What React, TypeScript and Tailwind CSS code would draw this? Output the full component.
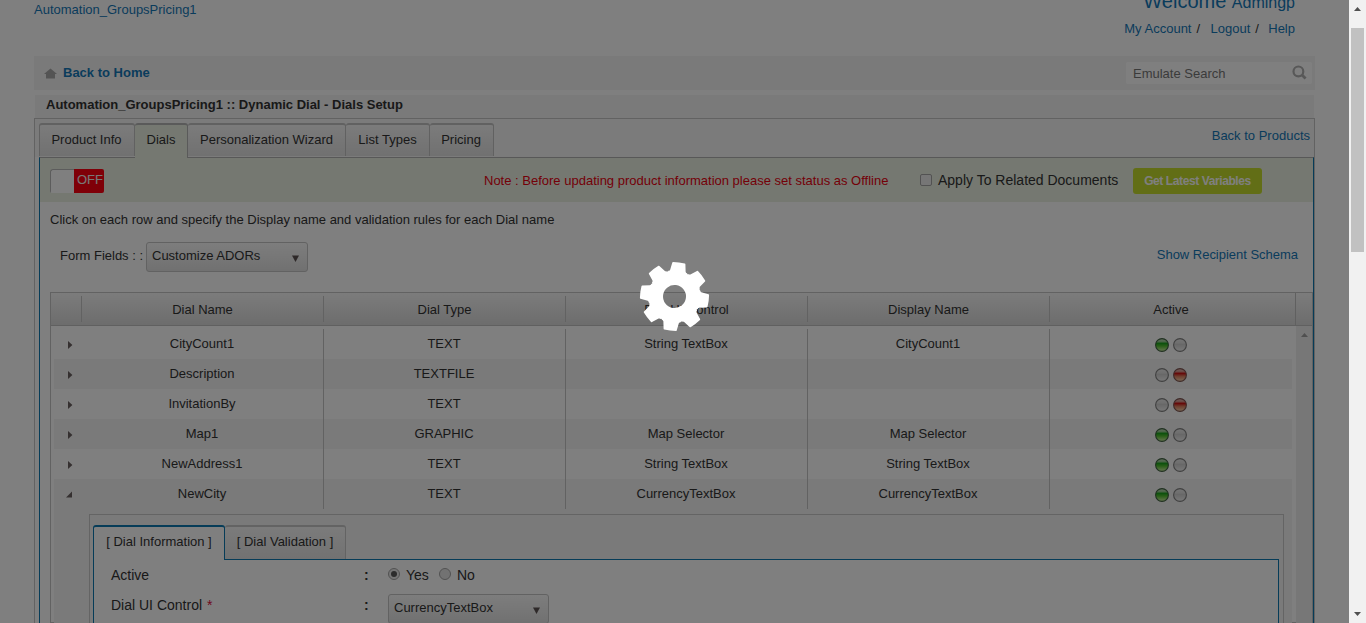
import React from 'react';

const FONT = "font-['Liberation_Sans',Arial,sans-serif]";

type Dial = { name: string; type: string; control: string; display: string; active: boolean };

const dials: Dial[] = [
  { name: 'CityCount1', type: 'TEXT', control: 'String TextBox', display: 'CityCount1', active: true },
  { name: 'Description', type: 'TEXTFILE', control: '', display: '', active: false },
  { name: 'InvitationBy', type: 'TEXT', control: '', display: '', active: false },
  { name: 'Map1', type: 'GRAPHIC', control: 'Map Selector', display: 'Map Selector', active: true },
  { name: 'NewAddress1', type: 'TEXT', control: 'String TextBox', display: 'String TextBox', active: true },
  { name: 'NewCity', type: 'TEXT', control: 'CurrencyTextBox', display: 'CurrencyTextBox', active: true },
];

function Orb({ color }: { color: 'green' | 'red' | 'gray' }) {
  return (
    <svg width="14" height="14" viewBox="0 0 14 14" className="block">
      <defs>
        <linearGradient id="orb-green" x1="0" y1="0" x2="0" y2="1">
          <stop offset="0" stopColor="#c4dcbc" />
          <stop offset="0.22" stopColor="#9ccc94" />
          <stop offset="0.38" stopColor="#1ca41c" />
          <stop offset="0.6" stopColor="#58c034" />
          <stop offset="1" stopColor="#d4f0a8" />
        </linearGradient>
        <linearGradient id="orb-red" x1="0" y1="0" x2="0" y2="1">
          <stop offset="0" stopColor="#e4bcb4" />
          <stop offset="0.22" stopColor="#d89890" />
          <stop offset="0.38" stopColor="#cc1414" />
          <stop offset="0.6" stopColor="#dc7c5c" />
          <stop offset="1" stopColor="#f8d8b0" />
        </linearGradient>
        <linearGradient id="orb-gray" x1="0" y1="0" x2="0" y2="1">
          <stop offset="0" stopColor="#ececec" />
          <stop offset="0.35" stopColor="#dedede" />
          <stop offset="0.45" stopColor="#d0d0d0" />
          <stop offset="1" stopColor="#f4f4f4" />
        </linearGradient>
      </defs>
      <circle
        cx="7"
        cy="7"
        r="6.4"
        fill={`url(#orb-${color})`}
        stroke={color === 'green' ? '#3f6040' : color === 'red' ? '#7c5450' : '#808080'}
        strokeWidth="1.1"
      />
    </svg>
  );
}

function Gear() {
  return (
    <svg width="69" height="69" viewBox="-34.5 -34.5 69 69" className="block overflow-visible">
      <g transform="rotate(7.5)" fill="#fff">
        <circle r="18.6" fill="none" stroke="#fff" strokeWidth="14.2" />
        {[0, 45, 90, 135, 180, 225, 270, 315].map((a) => (
          <path
            key={a}
            d="M-9.6 -22L-9.6 -24.6Q-8.4 -24.6 -7.8 -26L-6.6 -33.4Q-6.5 -34 -5.9 -34.1Q0 -34.8 5.9 -34.1Q6.5 -34 6.6 -33.4L7.8 -26Q8.4 -24.6 9.6 -24.6L9.6 -22Z"
            transform={`rotate(${a})`}
          />
        ))}
      </g>
    </svg>
  );
}

function SelectBox({ label, className }: { label: string; className: string }) {
  return (
    <div
      className={`flex justify-between rounded-[3px] border border-[#c4c4c4] bg-linear-to-b from-[#fbfbfb] to-[#e2e2e2] pl-[5px] pr-[8px] ${className}`}
    >
      <span className="leading-[26px]">{label}</span>
      <svg width="7" height="7" viewBox="0 0 7 7" className="mt-[12px]">
        <path d="M0 0.5H7L3.5 7Z" fill="#5c5252" />
      </svg>
    </div>
  );
}

function Tab({ label, className }: { label: string; className: string }) {
  return (
    <div
      className={`h-[33px] border-t-2 border-r border-[#c2c2c2] bg-linear-to-b from-[#f7f7f7] to-[#e2e2e2] text-center leading-[30px] rounded-t-[3px] ${className}`}
    >
      {label}
    </div>
  );
}

function TableRow({ dial, index }: { dial: Dial; index: number }) {
  const open = index === 5;
  const cell = 'w-[242px] border-r border-[#c4c4c4] pr-[1px] text-center leading-[29px]';
  return (
    <div className={`flex h-[30px] w-[1238px] ${index % 2 ? 'bg-[#f4f4f4]' : 'bg-white'}`}>
      <div className="w-[28px] pl-[12px] pt-[12px]">
        {open ? (
          <svg width="6" height="7" viewBox="0 0 6 7" className="block">
            <path d="M6 0.4V6.4H0Z" fill="#6a6060" />
          </svg>
        ) : (
          <svg width="6" height="8" viewBox="0 0 6 8" className="ml-[2px] block">
            <path d="M0 0L4.4 4L0 8Z" fill="#6a6060" />
          </svg>
        )}
      </div>
      <div className={cell}>{dial.name}</div>
      <div className={cell}>{dial.type}</div>
      <div className={cell}>{dial.control}</div>
      <div className={cell}>{dial.display}</div>
      <div className="flex w-[242px] justify-center gap-[4px] pt-[9px]">
        <Orb color={dial.active ? 'green' : 'gray'} />
        <Orb color={dial.active ? 'gray' : 'red'} />
      </div>
    </div>
  );
}

function DialDetail() {
  return (
    <div className="h-[130px] w-[1238px] bg-[#f4f4f4] pl-[35px] pt-[5px]">
      <div className="h-[130px] w-[1195px] border border-[#c8c8c8] bg-[#f5f5f5] pl-[3px] pt-[10px]">
        <div className="flex h-[34px]">
          <div className="z-10 h-[35px] w-[132px] rounded-t-[3px] border border-t-2 border-b-0 border-[#0c78b0] bg-white text-center leading-[30px]">
            [ Dial Information ]
          </div>
          <div className="h-[34px] w-[121px] rounded-t-[3px] border-t-2 border-r border-[#c6c6c6] bg-linear-to-b from-[#f7f7f7] to-[#e4e4e4] text-center leading-[30px]">
            [ Dial Validation ]
          </div>
        </div>
        <div className="h-[120px] w-[1186px] border border-[#0c78b0] bg-white pl-[17px] text-[14px]">
          <div className="flex h-[30px] items-center">
            <span className="w-[253px]">Active</span>
            <span className="w-[24px] font-bold">:</span>
            <span className="mb-[2px] flex size-[12px] items-center justify-center rounded-full border border-[#a4a4a4] bg-[#eaeaea]">
              <span className="size-[6px] rounded-full bg-[#585858]" />
            </span>
            <span className="ml-[6px] w-[27px]">Yes</span>
            <span className="mb-[2px] ml-[6px] size-[12px] rounded-full border border-[#a4a4a4] bg-[#e4e4e4]" />
            <span className="ml-[6px]">No</span>
          </div>
          <div className="flex h-[40px]">
            <span className="w-[253px] leading-[30px]">
              Dial UI Control <span className="ml-px text-[#e0103c]">*</span>
            </span>
            <span className="w-[24px] font-bold leading-[30px]">:</span>
            <SelectBox label="CurrencyTextBox" className="mt-[4px] h-[30px] w-[161px] text-[13px]" />
          </div>
        </div>
      </div>
    </div>
  );
}

function DialTable() {
  const head = 'my-[3px] w-[242px] border-r border-[#c4c4c4] text-center leading-[28px]';
  return (
    <div className="ml-[10px] h-[331px] w-[1263px] border border-[#c4c4c4]">
      <div className="flex h-[33px] border-b border-[#c0c0c0] bg-linear-to-b from-[#f8f8f8] to-[#dadada]">
        <div className="my-[3px] w-[31px] border-r border-[#c4c4c4]" />
        <div className={head}>Dial Name</div>
        <div className={head}>Dial Type</div>
        <div className={head}>Dial UI Control</div>
        <div className={head}>Display Name</div>
        <div className="w-[246px] border-r border-[#c0c0c0] pr-[3px] text-center leading-[34px]">Active</div>
      </div>
      <div className="flex">
        <div className="w-[1245px] pl-[3px] pt-[3px]">
          {dials.map((d, i) => (
            <TableRow key={d.name} dial={d} index={i} />
          ))}
          <DialDetail />
        </div>
        <div className="flex h-[300px] w-[16px] justify-center bg-[#efefef] pt-[7px]">
          <svg width="7" height="4" viewBox="0 0 7 4">
            <path d="M0 4L3.5 0L7 4Z" fill="#a0a0a0" />
          </svg>
        </div>
      </div>
    </div>
  );
}

export default function App() {
  return (
    <div className={`relative flex h-[623px] w-[1366px] overflow-hidden bg-white text-[13px] text-[#333] ${FONT}`}>
      <div className="h-[623px] w-[1349px] overflow-hidden pl-[34px]">
        <header className="flex h-[56px] w-[1281px] justify-between text-[#1478b8]">
          <div className="leading-[19px]">Automation_GroupsPricing1</div>
          <div className="pr-[20px] text-right">
            <div className="-mt-[9px] h-[28px] whitespace-nowrap text-[20px] leading-[20px]">
              Welcome <span className="text-[16px]">Admingp</span>
            </div>
            <div className="flex justify-end leading-[20px]">
              <span>My Account</span>
              <span className="ml-[5px] w-[14px] text-left text-[#333]">/</span>
              <span>Logout</span>
              <span className="ml-[5px] w-[13px] text-left text-[#333]">/</span>
              <span>Help</span>
            </div>
          </div>
        </header>

        <div className="flex h-[34px] w-[1281px] items-center justify-between bg-[#f4f4f4] pl-[10px] pr-[3px]">
          <div className="flex items-center">
            <svg width="13" height="11" viewBox="0 0 13 11">
              <path d="M6.5 0.5L13 6H11V10.5H2V6H0Z" fill="#a8a8a8" />
            </svg>
            <span className="ml-[6px] font-bold text-[#1478b8]">Back to Home</span>
          </div>
          <div className="flex h-[22px] w-[186px] items-center justify-between rounded-[2px] bg-white pl-[7px] pr-[5px] text-[#777]">
            <span className="pt-[2px]">Emulate Search</span>
            <svg width="15" height="15" viewBox="0 0 15 15" fill="none" stroke="#b0b0b0" className="mb-px">
              <circle cx="6.4" cy="6.4" r="4.9" strokeWidth="2.2" />
              <path d="M10 10L13.6 13.4" strokeWidth="2.8" />
            </svg>
          </div>
        </div>

        <div className="ml-[1px] mt-[5px] h-[23px] w-[1279px] bg-[#f4f4f4] pl-[11px] font-bold leading-[19px]">
          Automation_GroupsPricing1 :: Dynamic Dial - Dials Setup
        </div>

        <main className="h-[520px] w-[1281px] border border-[#c4c4c4]">
          <div className="flex h-[38px] justify-between bg-[#f6f6f6] pl-[4px] pt-[4px]">
            <div className="flex">
              <Tab label="Product Info" className="w-[96px] border-l pr-[1px]" />
              <div className="z-10 h-[35px] w-[53px] rounded-t-[3px] border-t-2 border-r border-[#b4b4b4] bg-[#eaf0e2] text-center leading-[30px]">
                Dials
              </div>
              <Tab label="Personalization Wizard" className="w-[158px]" />
              <Tab label="List Types" className="w-[84px]" />
              <Tab label="Pricing" className="w-[64px] pr-[1px]" />
            </div>
            <span className="pr-[4px] leading-[26px] text-[#1478b8]">Back to Products</span>
          </div>
          <div className="ml-[4px] h-[480px] w-[1275px] border border-t-[#b0b0b0] border-[#0c78b0]">
            <div className="flex h-[44px] items-center bg-[#eaf0e2] pl-[10px] pt-[2px]">
              <div className="flex h-[24px] w-[54px] overflow-hidden rounded-[2px]">
                <div className="w-[24px] rounded-tl-[3px] border-l border-t border-[#b8b8b8] bg-white" />
                <div className="w-[30px] bg-[#ff0010] pl-[3px] text-[13px] leading-[21px] text-[#f0f0f0]">OFF</div>
              </div>
              <span className="ml-[380px] w-[436px] text-[#e80010]">
                Note : Before updating product information please set status as Offline
              </span>
              <span className="mb-[2px] size-[12px] rounded-[2px] border border-[#a4a4a4] bg-[#ececec]" />
              <span className="mb-[2px] ml-[6px] w-[195px] text-[14px]">Apply To Related Documents</span>
              <span className="flex h-[26px] w-[129px] items-center justify-center rounded-[3px] bg-[#c5dd2c] text-[12px] font-bold tracking-[-0.4px] text-white">
                Get Latest Variables
              </span>
            </div>
            <div className="h-[39px] pl-[10px] leading-[35px]">
              Click on each row and specify the Display name and validation rules for each Dial name
            </div>
            <div className="flex h-[51px] pl-[20px]">
              <span className="w-[86px] leading-[29px]">Form Fields : :</span>
              <SelectBox label="Customize ADORs" className="mt-[1px] h-[30px] w-[162px]" />
              <span className="ml-auto pr-[15px] leading-[27px] tracking-[-0.02px] text-[#1478b8]">
                Show Recipient Schema
              </span>
            </div>
            <DialTable />
          </div>
        </main>
      </div>

      <div className="absolute left-0 top-0 z-20 flex h-[623px] w-[1349px] bg-black/50">
        <div className="ml-[640px] mt-[262px]">
          <Gear />
        </div>
      </div>

      <div className="flex h-[623px] w-[17px] flex-col items-center bg-[#f1f1f1]">
        <svg width="7" height="4" viewBox="0 0 7 4" className="mt-[7px] block">
          <path d="M0 4L3.5 0L7 4Z" fill="#505050" />
        </svg>
        <div className="mt-[17px] h-[224px] w-[13px] bg-[#c1c1c1]" />
        <svg width="7" height="4" viewBox="0 0 7 4" className="mb-[7px] mt-auto block">
          <path d="M0 0L3.5 4L7 0Z" fill="#505050" />
        </svg>
      </div>
    </div>
  );
}
